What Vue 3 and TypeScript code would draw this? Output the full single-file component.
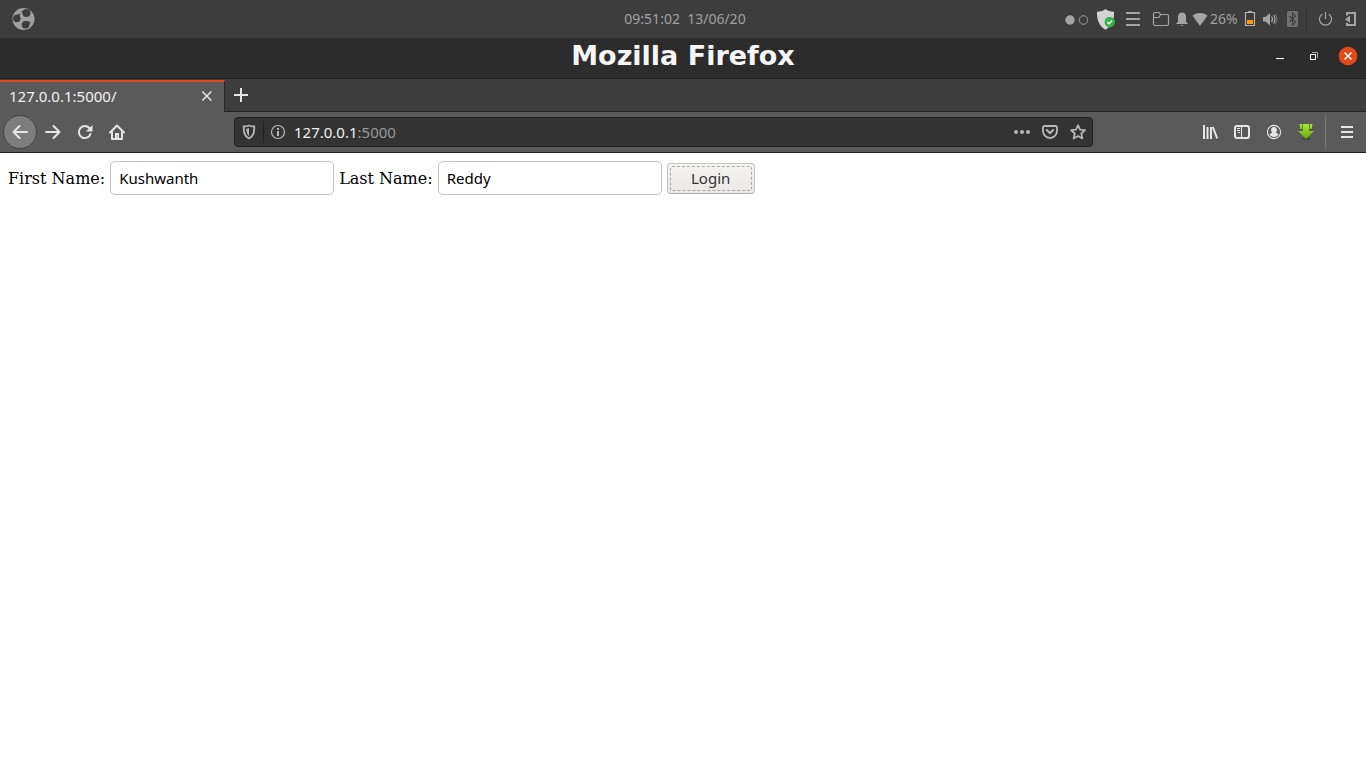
<script setup lang="ts">
import { ref } from 'vue'

const address = '127.0.0.1:5000'
const host = '127.0.0.1'
const port = ':5000'
const firstName = ref('Kushwanth')
const lastName = ref('Reddy')
</script>

<template>
  <div class="desktop">
    <header class="panel">
      <div class="panel-side">
        <button class="plain launcher" aria-label="Applications">
          <svg width="24" height="24" viewBox="0 0 24 24">
            <circle cx="12.500" cy="12" r="11" fill="#a0a0a0" />
            <g fill="#3d3d3d">
              <circle cx="15.500" cy="6" r="4" />
              <path d="M10.500 4.500l2-1v4z" />
              <circle cx="5.800" cy="11.500" r="3.700" />
              <path d="M5.500 7.800L9.500 6.500 8 10z" />
              <circle cx="14.500" cy="17.700" r="3.800" />
              <path d="M15 14l4.500 1-1.700 4z" />
            </g>
          </svg>
        </button>
      </div>
      <time class="clock">09:51:02&nbsp; 13/06/20</time>
      <div class="panel-side tray">
        <svg class="workspaces" width="24" height="22" viewBox="0 0 24 22">
          <circle cx="6" cy="12" r="4.700" fill="#a4a4a4" />
          <circle cx="19.500" cy="12" r="4.300" fill="none" stroke="#999" />
        </svg>
        <svg class="security" width="20" height="22" viewBox="0 0 20 22">
          <path fill="#d4d4d4" d="M9.500 1c2.200 1.800 5 2.500 8.500 2.700.2 8.300-2 14-8.500 18C3 17.700.8 12 1 3.700 4.500 3.500 7.300 2.800 9.500 1z" />
          <circle cx="13.700" cy="14" r="5.200" fill="#32b44a" />
          <path fill="none" stroke="#fff" stroke-width="1.300" d="M11.200 14l1.800 1.800 3.200-3.300" />
        </svg>
        <svg class="list" width="16" height="22" viewBox="0 0 16 22">
          <path stroke="#a4a4a4" stroke-width="2" d="M1 5h14M1 11h14M1 17h14" />
        </svg>
        <svg class="folder" width="18" height="22" viewBox="0 0 18 22">
          <path fill="none" stroke="#a4a4a4" stroke-width="1.200" d="M1.500 16V6Q1.500 4.500 3 4.500h4l1.500 2H15q1.500 0 1.500 1.500v8q0 1.500-1.500 1.500H3Q1.500 17.500 1.500 16zM1.500 9.500h5.500l1.500-3" />
        </svg>
        <svg class="bell" width="14" height="22" viewBox="0 0 14 22">
          <path fill="#a4a4a4" d="M7 4.500c2.600 0 4 2 4 4.500v4.500l2 2.500H1l2-2.500V9c0-2.500 1.400-4.500 4-4.500zM5.500 17h3q-1.500 2-3 0z" />
        </svg>
        <svg class="wifi" width="16" height="22" viewBox="0 0 16 22">
          <path fill="#a4a4a4" d="M.5 7.500C5 4.200 11 4.200 15.500 7.500L8 18z" />
        </svg>
        <span class="charge">26%</span>
        <svg class="battery" width="12" height="22" viewBox="0 0 12 22">
          <path fill="none" stroke="#b0b0b0" stroke-width="1.200" d="M1.500 4.500h9v13h-9z" />
          <path fill="#b0b0b0" d="M4 3h4v1.500H4z" />
          <path fill="#ff9b12" d="M3 12h6v4H3z" />
        </svg>
        <svg class="volume" width="18" height="22" viewBox="0 0 18 22">
          <path fill="#a4a4a4" d="M1 9h2.500l4.500-4v12.500l-4.500-4H1z" />
          <path fill="none" stroke="#a4a4a4" stroke-width="1.200" d="M9.500 8.500q2 2.700 0 5.500M11.500 7q3 4.200 0 8.500" />
          <path fill="none" stroke="#777" d="M13.500 6q3 5.200 0 10.500" />
        </svg>
        <svg class="bluetooth" width="12" height="22" viewBox="0 0 12 22">
          <rect x="1" y="3" width="11" height="16" rx="1.500" fill="#717171" />
          <path fill="none" stroke="#3d3d3d" stroke-width="1.100" d="M3.500 8l6 6-3 3V5l3 3-6 6" />
        </svg>
        <span class="panel-rule"></span>
        <button class="plain" aria-label="Shut down">
          <svg width="14" height="22" viewBox="0 0 14 22">
            <path fill="none" stroke="#a4a4a4" stroke-width="1.200" d="M6.500 4v7M3.300 6a6 6 0 1 0 6.400 0" />
          </svg>
        </button>
        <button class="plain logout" aria-label="Log out">
          <svg width="12" height="22" viewBox="0 0 12 22">
            <path fill="none" stroke="#a4a4a4" stroke-width="2" d="M2 7.500V5h8v12H2V15" />
            <path fill="#a4a4a4" d="M0 11.300L5 7.500v7.500z" />
          </svg>
        </button>
      </div>
    </header>

    <section class="browser">
      <div class="titlebar">
        <span></span>
        <h1>Mozilla Firefox</h1>
        <div class="window-controls">
          <button class="plain" aria-label="Minimize">
            <svg width="20" height="20" viewBox="0 0 20 20"><path fill="#fff" d="M6 12h8v1H6z" /></svg>
          </button>
          <button class="plain" aria-label="Restore">
            <svg width="20" height="20" viewBox="0 0 20 20">
              <path fill="none" stroke="#aaa" d="M8 6.500h5.500V12" />
              <path fill="none" stroke="#fff" d="M6.500 8.500h5v5h-5z" />
            </svg>
          </button>
          <button class="plain" aria-label="Close">
            <svg width="20" height="20" viewBox="0 0 20 20">
              <circle cx="10" cy="10" r="9.300" fill="#df4a16" />
              <path stroke="#fff" stroke-width="1.500" d="M6.500 6.500l7 7m0-7l-7 7" />
            </svg>
          </button>
        </div>
      </div>

      <div class="tabs">
        <div class="tab">
          <span>{{ address }}/</span>
          <button class="plain" aria-label="Close tab">
            <svg width="16" height="16" viewBox="0 0 16 16"><path stroke="#e6e6e6" stroke-width="1.600" d="M3.300 3.500l9 9m0-9l-9 9" /></svg>
          </button>
        </div>
        <button class="plain new-tab" aria-label="New tab">
          <svg width="16" height="16" viewBox="0 0 16 16"><path stroke="#e6e6e6" stroke-width="2" d="M1 8h14M8 1v14" /></svg>
        </button>
      </div>

      <nav class="toolbar">
        <div class="nav-buttons">
          <button class="plain back" aria-label="Back">
            <svg width="16" height="16" viewBox="0 0 16 16"><path class="line" d="M15 8H1.500M7.500 2l-6 6 6 6" /></svg>
          </button>
          <button class="plain" aria-label="Forward">
            <svg width="16" height="16" viewBox="0 0 16 16"><path class="line" d="M1 8h13.500M8.500 2l6 6-6 6" /></svg>
          </button>
          <button class="plain" aria-label="Reload">
            <svg width="16" height="16" viewBox="0 0 16 16">
              <path class="line" d="M13.500 10A6 6 0 1 1 12.300 4" />
              <path fill="#e6e6e6" d="M15.500 1v6.500H9z" />
            </svg>
          </button>
          <button class="plain" aria-label="Home">
            <svg width="16" height="16" viewBox="0 0 16 16">
              <path class="line" d="M1 8.500L8 1.500l7 7M3 8v7h10V8" />
              <path fill="#e6e6e6" d="M6 9h4v6H6z" />
              <path fill="#5a5a5a" d="M8 11.500h1v1H8z" />
            </svg>
          </button>
        </div>

        <div class="address">
          <button class="plain" aria-label="Tracking protection">
            <svg width="16" height="16" viewBox="0 0 16 16">
              <path fill="none" stroke="#b8b8b8" stroke-width="1.800" d="M8 1.500c1.500.7 3 1 5.300 1 0 5.500-.5 9.500-5.300 12-4.800-2.500-5.300-6.500-5.300-12 2.300 0 3.800-.3 5.300-1z" />
              <path fill="#b8b8b8" d="M8 4v8c-2-1.500-2.600-4-2.700-7.300C6.300 4.700 7.300 4.400 8 4z" />
            </svg>
          </button>
          <span class="address-rule"></span>
          <button class="plain" aria-label="Site information">
            <svg width="16" height="16" viewBox="0 0 16 16">
              <circle cx="8" cy="8" r="6.500" fill="none" stroke="#b8b8b8" stroke-width="1.200" />
              <path fill="#b8b8b8" d="M7 4h2v2H7zM7 7h2v5H7z" />
            </svg>
          </button>
          <span class="url"><span>{{ host }}</span><span class="port">{{ port }}</span></span>
          <button class="plain" aria-label="Page actions">
            <svg width="16" height="16" viewBox="0 0 16 16"><g fill="#b8b8b8"><circle cx="2" cy="8" r="2" /><circle cx="8" cy="8" r="2" /><circle cx="14" cy="8" r="2" /></g></svg>
          </button>
          <button class="plain" aria-label="Save to Pocket">
            <svg width="16" height="16" viewBox="0 0 16 16">
              <path fill="none" stroke="#b8b8b8" stroke-width="1.800" d="M2.500 2h11q1.500 0 1.500 1.500V7A7 7 0 0 1 1 7V3.500Q1 2 2.500 2z" />
              <path fill="none" stroke="#b8b8b8" stroke-width="2" stroke-linecap="round" stroke-linejoin="round" d="M4.800 6L8 9.200 11.200 6" />
            </svg>
          </button>
          <button class="plain" aria-label="Bookmark this page">
            <svg width="16" height="16" viewBox="0 0 16 16"><path fill="none" stroke="#b8b8b8" stroke-width="1.700" stroke-linejoin="round" d="M8 1.200l2 4.500 5 .5-3.700 3.300 1.100 5L8 12l-4.400 2.500 1.100-5L1 6.200l5-.5z" /></svg>
          </button>
        </div>

        <div class="tools">
          <button class="plain" aria-label="Library">
            <svg width="16" height="16" viewBox="0 0 16 16"><path fill="none" stroke="#e6e6e6" stroke-width="2" d="M2 1v14M5.500 3v12M9 3v12M10.800 3l4.400 11.500" /></svg>
          </button>
          <button class="plain" aria-label="Sidebars">
            <svg width="16" height="16" viewBox="0 0 16 16">
              <rect x="1" y="2" width="14" height="12" rx="2" fill="none" stroke="#e6e6e6" stroke-width="2" />
              <path stroke="#e6e6e6" d="M7.500 2v12M3 4.500h3M3 6.500h3M4 8.500h2" />
            </svg>
          </button>
          <button class="plain" aria-label="Account">
            <svg width="16" height="16" viewBox="0 0 16 16">
              <circle cx="8" cy="8" r="6.600" fill="none" stroke="#e6e6e6" stroke-width="1.100" />
              <path fill="#e6e6e6" d="M8 3c1.900 0 2.900 1.200 2.900 2.800 0 1.400-.5 2.300-1.100 3 .9.5 2.200.7 2.700 1.500C11.500 12 10 13 8 13s-3.500-1-4.500-2.700c.5-.8 1.800-1 2.700-1.500-.6-.7-1.100-1.600-1.100-3C5.100 4.200 6.100 3 8 3z" />
            </svg>
          </button>
          <button class="plain" aria-label="Download helper">
            <svg width="16" height="18" viewBox="0 0 16 18">
              <defs><linearGradient id="arrow" x2="0" y2="1"><stop stop-color="#a9e83a" /><stop offset="1" stop-color="#68a80c" /></linearGradient></defs>
              <ellipse cx="8" cy="15.700" rx="5" ry="1.200" fill="#484848" />
              <path fill="url(#arrow)" d="M5 1h6v7h5l-8 8-8-8h5zM1.500 1H4v5H2.500zM12 1h2.500l-1 5H12z" />
              <path stroke="#5e8717" d="M4.500 1v6M11.500 1v6" />
            </svg>
          </button>
          <span class="tool-rule"></span>
          <button class="plain" aria-label="Open menu">
            <svg width="16" height="16" viewBox="0 0 16 16"><path stroke="#e6e6e6" stroke-width="2" d="M2 3h12M2 8h12M2 13h12" /></svg>
          </button>
        </div>
      </nav>

      <main>
        <form @submit.prevent>
          <label for="first-name">First Name:</label>
          <input id="first-name" v-model="firstName" type="text" />
          <label for="last-name">Last Name:</label>
          <input id="last-name" v-model="lastName" type="text" />
          <button class="login" type="submit"><span>Login</span></button>
        </form>
      </main>
    </section>
  </div>
</template>

<style>
body {
  margin: 0;
  background: #fff;
}
</style>

<style scoped>
.desktop {
  min-height: 100vh;
  font: 15px/20px "Noto Sans", sans-serif;
  background: #fff;
}

svg {
  display: block;
  flex: none;
}

.plain {
  display: flex;
  align-items: center;
  justify-content: center;
  flex: none;
  padding: 0;
  border: 0;
  background: none;
}

.line {
  fill: none;
  stroke: #e6e6e6;
  stroke-width: 2;
  stroke-linecap: round;
  stroke-linejoin: round;
}

.panel {
  display: grid;
  grid-template-columns: 1fr auto 1fr;
  align-items: center;
  height: 38px;
  background: #3d3d3d;
  color: #a0a0a0;
}

.panel-side {
  display: flex;
  align-items: center;
}

.launcher {
  margin-left: 11px;
}

.clock {
  font-size: 14px;
  padding-left: 4px;
}

.tray {
  justify-content: flex-end;
  padding-right: 9px;
}

.workspaces {
  margin-right: 8px;
}

.security {
  margin-right: 9px;
}

.list {
  margin-right: 11px;
}

.folder {
  margin-right: 5px;
}

.bell {
  margin-right: 3px;
}

.wifi {
  margin-right: 2px;
}

.charge {
  width: 34px;
  font-size: 14px;
}

.battery,
.volume {
  margin-right: 6px;
}

.panel-rule {
  width: 1px;
  height: 26px;
  margin: 0 12px 0 8px;
  background: #333;
}

.logout {
  margin-left: 12px;
}

.titlebar {
  display: grid;
  grid-template-columns: 1fr auto 1fr;
  height: 40px;
  border-bottom: 1px solid #232323;
  background: #2c2c2c;
}

h1 {
  margin: 0;
  color: #f6f6f6;
  font: bold 27px/36px "DejaVu Sans", sans-serif;
}

.window-controls {
  display: flex;
  align-items: center;
  justify-content: flex-end;
  gap: 14px;
  height: 36px;
  padding-right: 8px;
}

.tabs {
  display: flex;
  height: 33px;
  background: #3d3d3d;
}

.tab {
  display: flex;
  align-items: center;
  justify-content: space-between;
  box-sizing: border-box;
  width: 225px;
  margin-top: 1px;
  padding: 0 9px 3px;
  border-top: 2px solid #df4a16;
  border-right: 1px solid #252525;
  background: #5a5a5a;
  color: #f2f2f2;
}

.new-tab {
  flex: 1;
  justify-content: flex-start;
  padding-left: 8px;
  border-bottom: 1px solid #252525;
}

.toolbar {
  display: flex;
  align-items: center;
  height: 40px;
  border-bottom: 1px solid #1e1e1e;
  background: #5a5a5a;
}

.nav-buttons {
  display: flex;
  align-items: center;
  gap: 16px;
  flex: 0 0 234px;
}

.back {
  box-sizing: border-box;
  width: 34px;
  height: 34px;
  margin: 0 -8px 0 3px;
  border: 1px solid #444;
  border-radius: 50%;
  background: #7d7d7d;
}

.address {
  display: flex;
  align-items: center;
  flex: 1;
  gap: 12px;
  box-sizing: border-box;
  height: 30px;
  padding: 0 6px;
  border: 1px solid #222;
  border-radius: 4px;
  background: #333;
}

.address-rule {
  width: 1px;
  height: 22px;
  margin: 0 -6px;
  background: #222;
}

.url {
  flex: 1;
  margin-left: -4px;
  color: #f2f2f2;
}

.port {
  color: #999;
}

.tools {
  display: flex;
  align-items: center;
  gap: 16px;
  margin-left: 109px;
  padding-right: 11px;
}

.tool-rule {
  width: 1px;
  height: 34px;
  margin: 0 -3px 0 -5px;
  background: #777;
}

form {
  display: flex;
  align-items: center;
  gap: 5px;
  padding: 8px;
  color: #000;
}

label {
  padding-top: 2px;
  font: 16px/20px "DejaVu Serif", serif;
}

input {
  box-sizing: border-box;
  width: 224px;
  height: 34px;
  padding: 0 8px;
  border: 1px solid #c8c3be;
  border-radius: 5px;
  outline: 0;
  background: #fff;
  color: #000;
  font: 15px/20px "Noto Sans", sans-serif;
}

.login {
  box-sizing: border-box;
  width: 88px;
  height: 31px;
  padding: 2px;
  border: 1px solid #c8c3be;
  border-bottom-color: #b5afa9;
  border-radius: 4px;
  background: linear-gradient(#f5f4f3, #e9e8e6);
  color: #333;
  font: 15px/20px "Noto Sans", sans-serif;
}

.login span {
  display: block;
  padding: 1px 0 2px;
  border: 1px dashed #aaa;
  border-radius: 2px;
}
</style>
